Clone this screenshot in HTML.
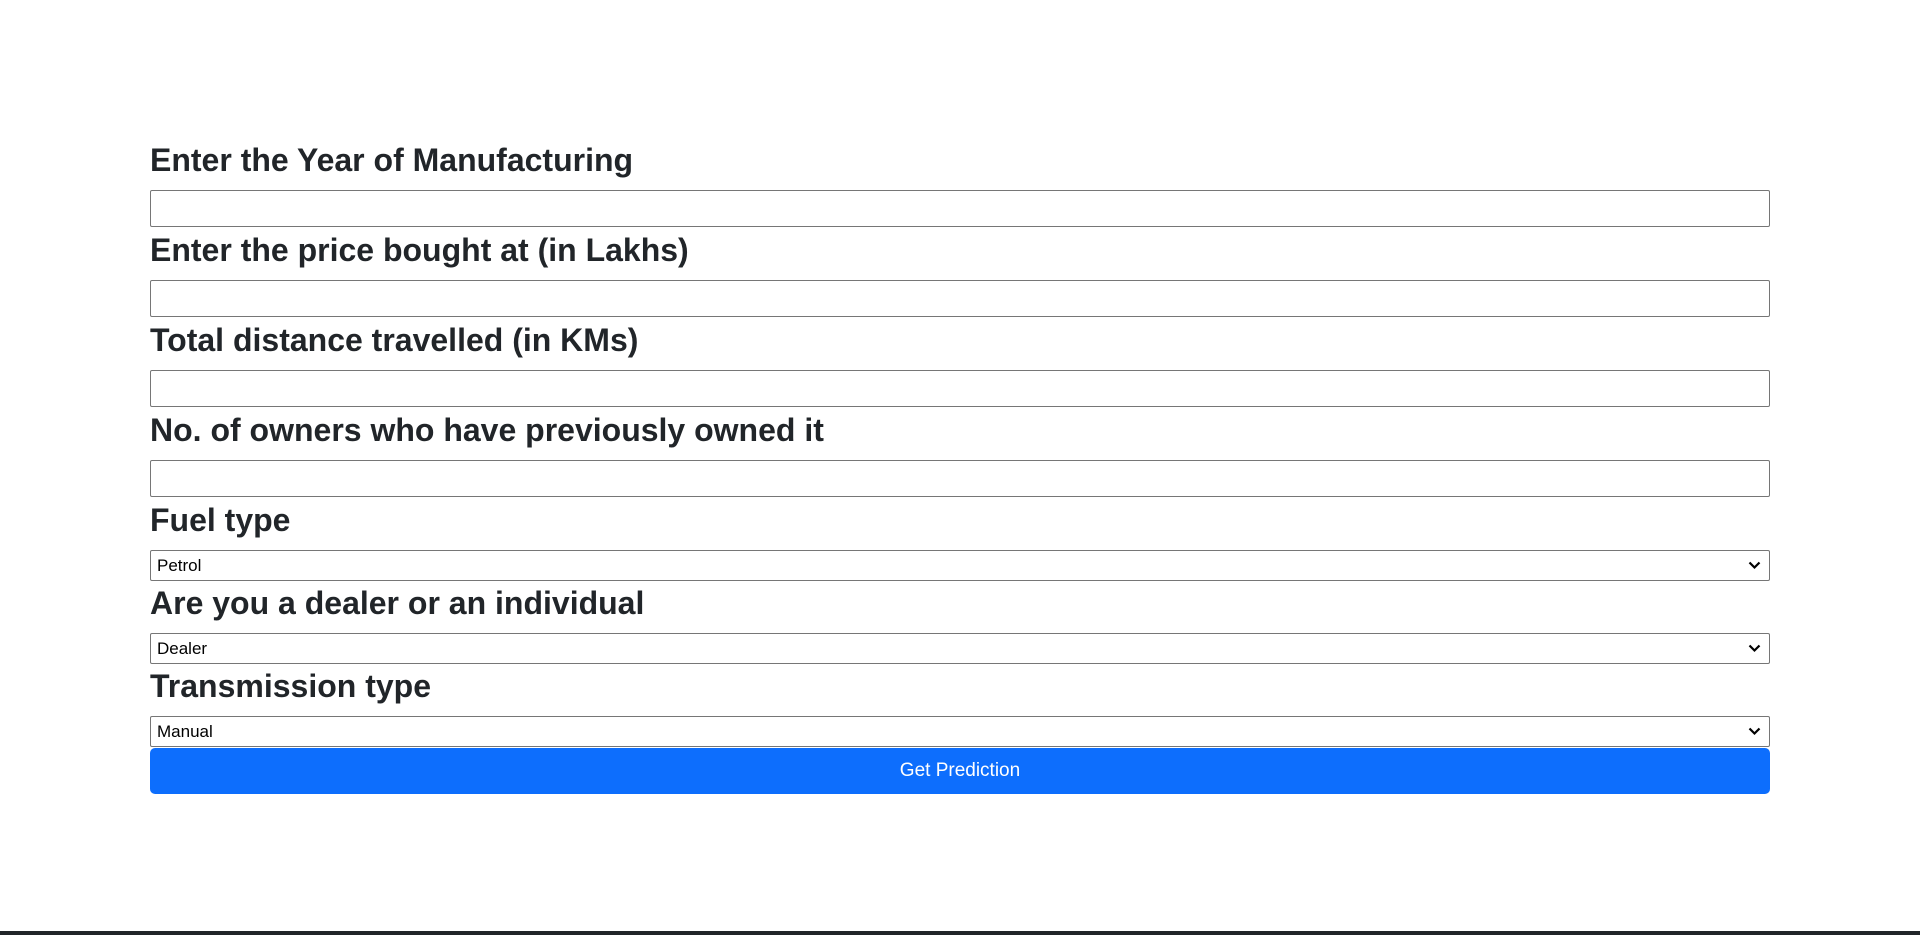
<!DOCTYPE html>
<html><head><meta charset="utf-8"><style>
html,body{margin:0;padding:0;background:#fff;}
body{width:1920px;height:935px;position:relative;overflow:hidden;font-family:"Liberation Sans",sans-serif;color:#212529;}
.wrap{position:absolute;left:150px;top:138px;width:1620px;}
h3{margin:0 0 10px 0;font-size:32px;font-weight:700;line-height:44px;height:42px;letter-spacing:0;}
.inp{box-sizing:border-box;height:37px;border:1px solid #767676;border-radius:2px;background:#fff;margin-bottom:1px;}
.sel{box-sizing:border-box;height:31px;border:1px solid #767676;border-radius:2px;background:#fff;position:relative;font-size:17px;line-height:29px;padding-left:6px;color:#000;}
.sel svg{position:absolute;right:8px;top:10px;}
.btn{height:46px;background:#0d6efd;border-radius:5px;color:#fff;font-size:19px;text-align:center;line-height:46px;margin-top:1px;}
.bar{position:absolute;left:0;right:0;bottom:0;height:4px;background:#212529;}
</style></head><body>
<div class="wrap">
<h3>Enter the Year of Manufacturing</h3>
<div class="inp"></div>
<h3>Enter the price bought at (in Lakhs)</h3>
<div class="inp"></div>
<h3>Total distance travelled (in KMs)</h3>
<div class="inp"></div>
<h3>No. of owners who have previously owned it</h3>
<div class="inp"></div>
<h3>Fuel type</h3>
<div class="sel">Petrol<svg width="13" height="9" viewBox="0 0 13 9"><path d="M1.5 1.5L6.5 6.5L11.5 1.5" fill="none" stroke="#000" stroke-width="2.2"/></svg></div>
<h3>Are you a dealer or an individual</h3>
<div class="sel">Dealer<svg width="13" height="9" viewBox="0 0 13 9"><path d="M1.5 1.5L6.5 6.5L11.5 1.5" fill="none" stroke="#000" stroke-width="2.2"/></svg></div>
<h3>Transmission type</h3>
<div class="sel">Manual<svg width="13" height="9" viewBox="0 0 13 9"><path d="M1.5 1.5L6.5 6.5L11.5 1.5" fill="none" stroke="#000" stroke-width="2.2"/></svg></div>
<div class="btn">Get Prediction</div>
</div>
<div class="bar"></div>
</body></html>
